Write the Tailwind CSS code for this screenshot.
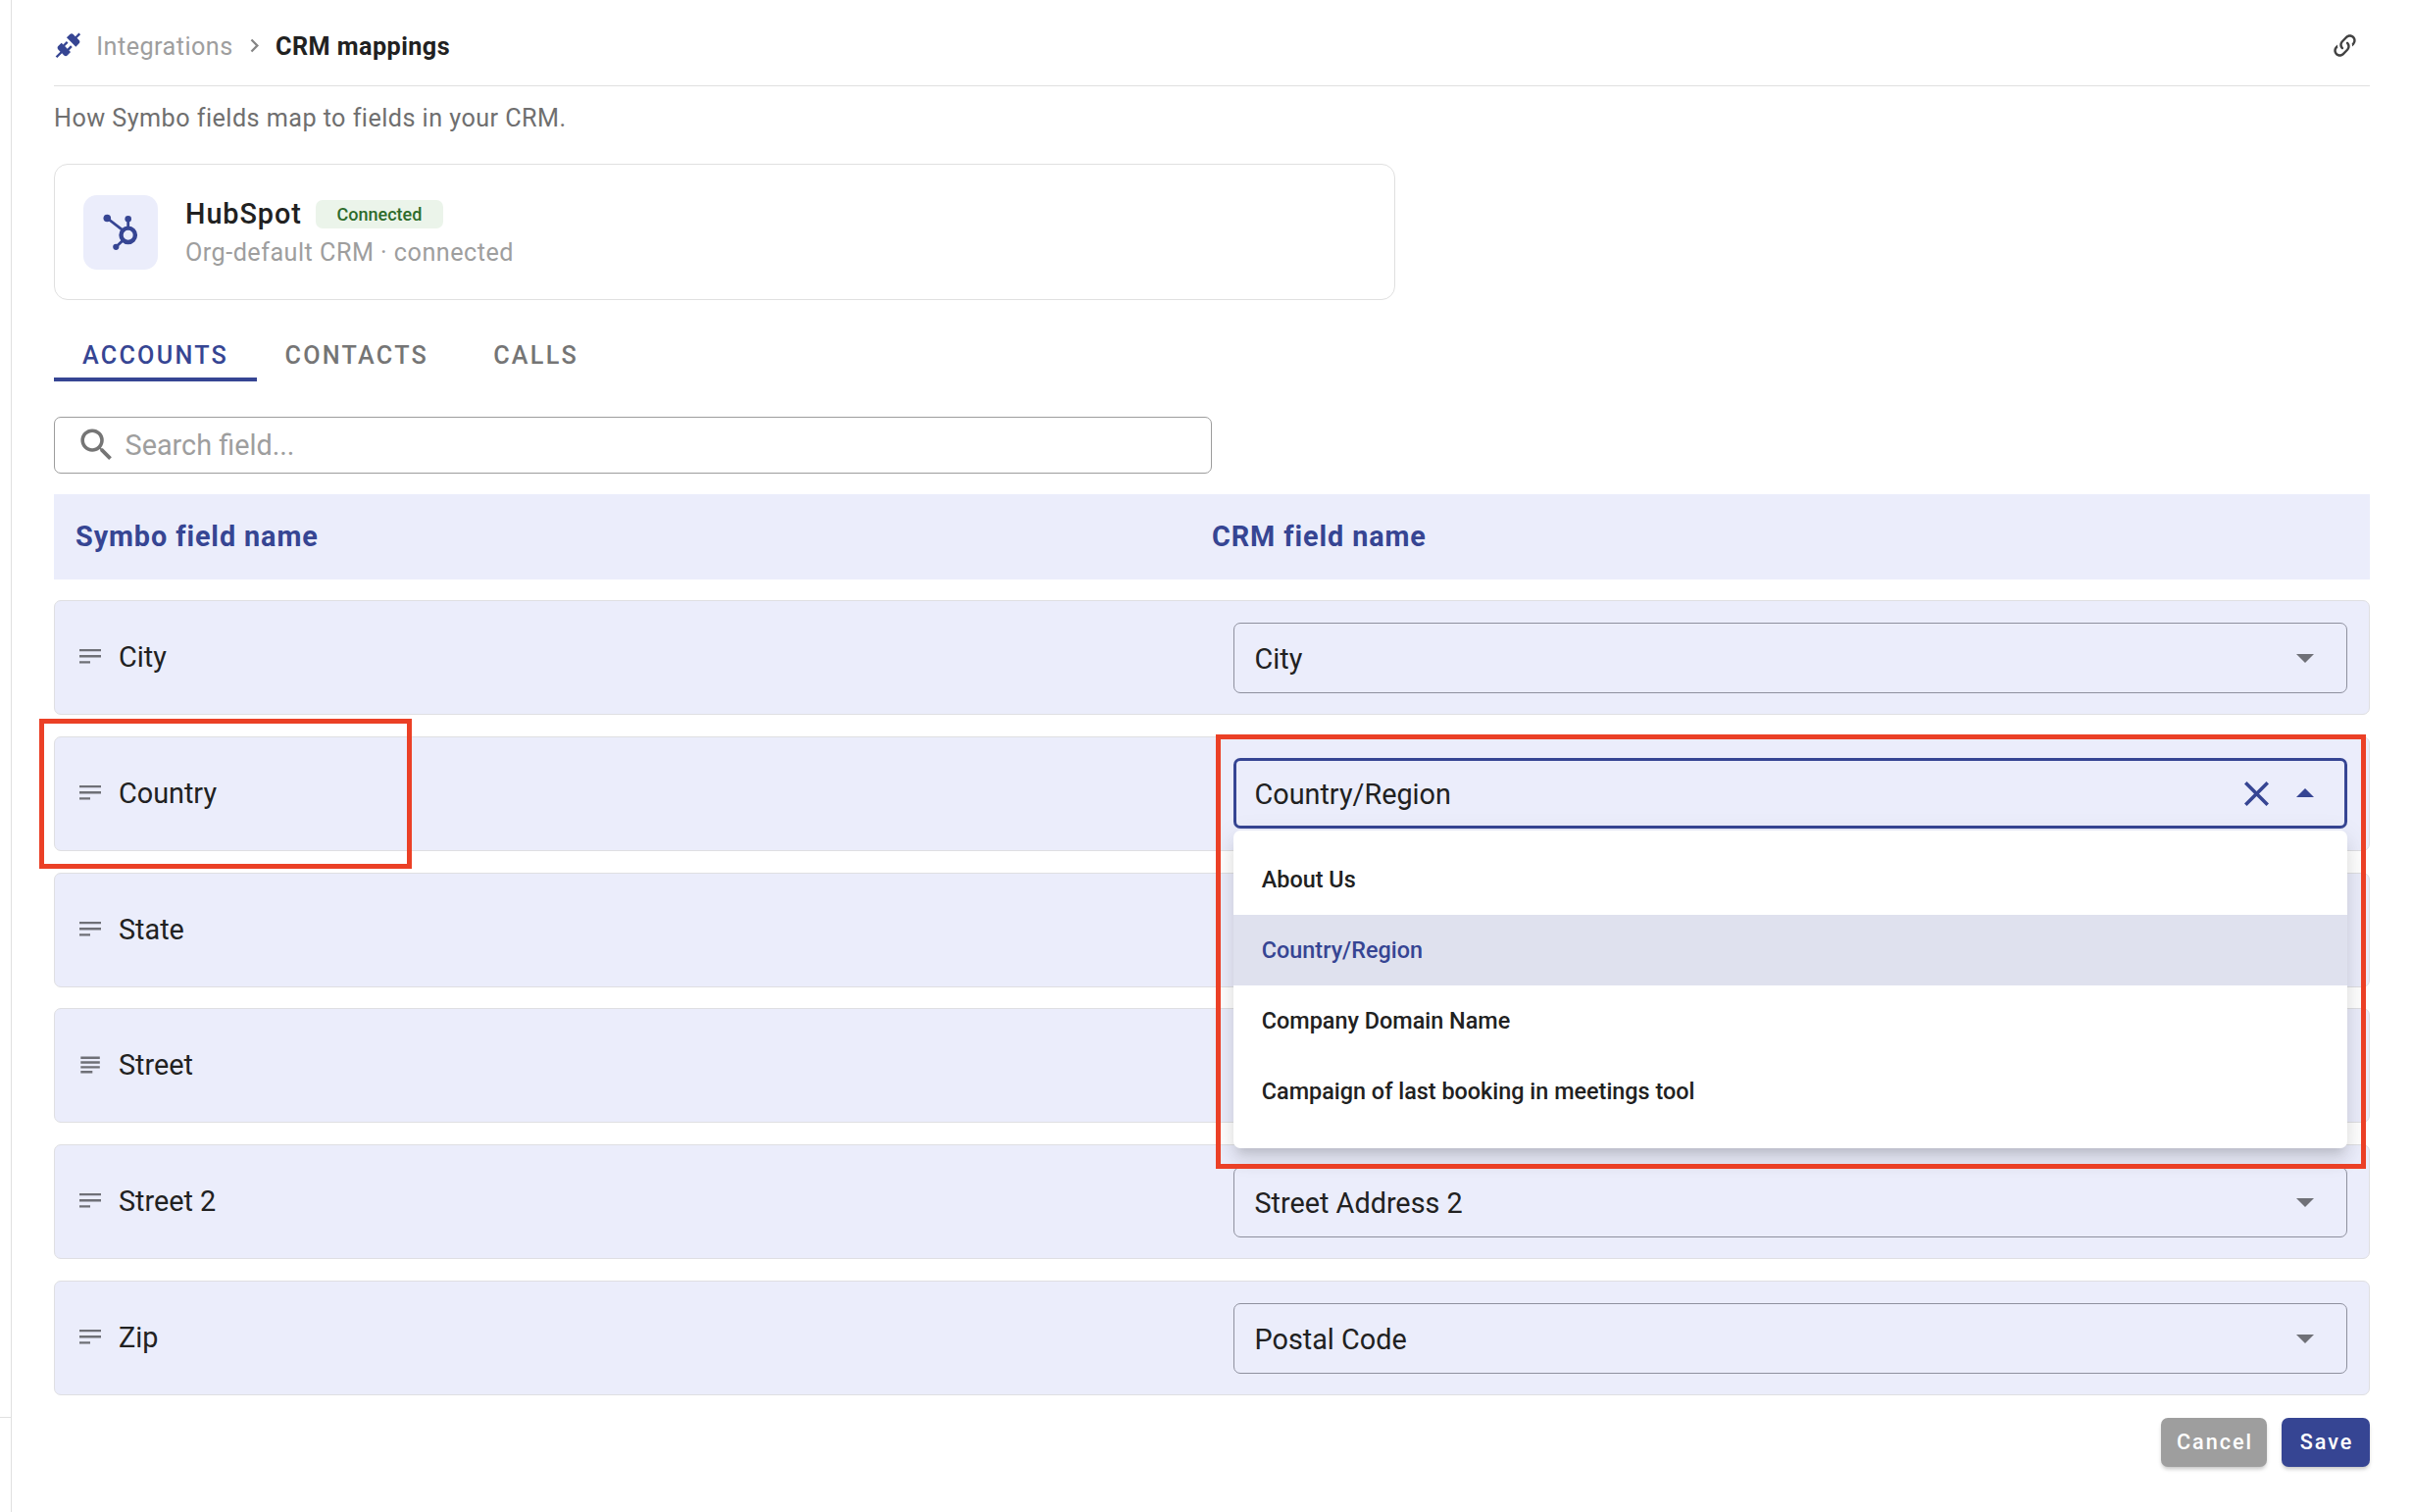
<!DOCTYPE html>
<html lang="en">
<head>
<meta charset="utf-8">
<title>CRM mappings</title>
<script src="https://cdn.jsdelivr.net/npm/@tailwindcss/browser@4"></script>
</head>
<body class="relative h-[1542px] w-[2460px] overflow-hidden bg-white font-[Roboto,sans-serif] text-[#212121]">
<svg class="hidden">
  <symbol id="text-short" viewBox="0 0 22 16"><path d="M0 0h22v2.2H0zM0 6h22v2.5H0zM0 12.2h11v2.4H0z"/></symbol>
  <symbol id="text-long" viewBox="0 0 22 18"><path d="M1.3 .5h19.5v2.4H1.3zM1.3 5.3h19.5v2.4H1.3zM1.3 10.2h19.5v2.4H1.3zM1.3 15h12v2.4h-12z"/></symbol>
  <symbol id="caret" viewBox="0 0 18 9"><path d="M0 0h18L9 9z"/></symbol>
</svg>
<div class="flex h-full">
  <aside class="h-full w-[12px] shrink-0 border-r border-[#e0e0e0]">
    <div class="h-[1446px] border-b border-[#e0e0e0]"></div>
  </aside>

  <main class="ml-[43px] flex w-[2362px] flex-col">
    <header class="flex h-[88px] items-center border-b border-[#e0e0e0] pt-2 text-[25.2px]">
      <svg class="-mt-0.5 size-[28.8px] fill-[#364593]" viewBox="0 0 24 24"><path d="M21.4 7.5C22.2 8.3 22.2 9.6 21.4 10.3L18.6 13.1L10.8 5.3L13.6 2.5C14.4 1.7 15.7 1.7 16.4 2.5L18.2 4.3L21.2 1.3L22.6 2.7L19.6 5.7L21.4 7.5M15.6 13.3L14.2 11.9L11.4 14.7L9.3 12.6L12.1 9.8L10.7 8.4L7.9 11.2L6.4 9.8L3.6 12.6C2.8 13.4 2.8 14.7 3.6 15.4L5.4 17.2L1.4 21.2L2.8 22.6L6.8 18.6L8.6 20.4C9.4 21.2 10.7 21.2 11.4 20.4L14.2 17.6L12.8 16.2L15.6 13.3Z"/></svg>
      <span class="ml-[14.5px] w-[147.7px] pt-px tracking-[0.45px] text-[#9e9e9e]">Integrations</span>
      <svg class="-mt-0.5 size-[27px] fill-[#858585]" viewBox="0 0 24 24"><path d="M8.59 16.58L13.17 12L8.59 7.41L10 6L16 12L10 18L8.59 16.58Z"/></svg>
      <span class="ml-[8px] pt-px font-bold tracking-[0.45px]">CRM mappings</span>
      <svg class="-mt-[3px] mr-[11px] ml-auto size-[29px] fill-[#424242]" viewBox="0 0 24 24"><path d="M10.59,13.41C11,13.8 11,14.44 10.59,14.83C10.2,15.22 9.56,15.22 9.17,14.83C7.22,12.88 7.22,9.71 9.17,7.76V7.76L12.71,4.22C14.66,2.27 17.83,2.27 19.78,4.22C21.73,6.17 21.73,9.34 19.78,11.29L18.29,12.78C18.3,11.96 18.17,11.14 17.89,10.36L18.36,9.88C19.54,8.71 19.54,6.81 18.36,5.64C17.19,4.46 15.29,4.46 14.12,5.64L10.59,9.17C9.41,10.34 9.41,12.24 10.59,13.41M13.41,9.17C13.8,8.78 14.44,8.78 14.83,9.17C16.78,11.12 16.78,14.29 14.83,16.24V16.24L11.29,19.78C9.34,21.73 6.17,21.73 4.22,19.78C2.27,17.83 2.27,14.66 4.22,12.71L5.71,11.22C5.7,12.04 5.83,12.86 6.11,13.65L5.64,14.12C4.46,15.29 4.46,17.19 5.64,18.36C6.81,19.54 8.71,19.54 9.88,18.36L13.41,14.83C14.59,13.66 14.59,11.76 13.41,10.59C13,10.2 13,9.56 13.41,9.17Z"/></svg>
    </header>

    <p class="flex h-[65px] items-center pt-px text-[25.2px] tracking-[0.45px] text-[#6f6f6f]">How Symbo fields map to fields in your CRM.</p>

    <section class="mt-[14px] flex h-[139px] w-[1368px] items-center rounded-[14px] border border-[#e0e0e0] pl-[29px]">
      <div class="size-[76px] rounded-[14px] bg-[#ebedfb]">
        <svg class="size-[76px]" viewBox="85 199 76 76" fill="#364593" stroke="#364593">
          <circle cx="109.3" cy="222.5" r="3.8" stroke="none"/>
          <circle cx="130.7" cy="223.2" r="3.3" stroke="none"/>
          <circle cx="118.3" cy="251.8" r="3.1" stroke="none"/>
          <path d="M109.3 222.5L125 234.6M130.7 223V232M118.3 251.8L125 245.5" fill="none" stroke-width="2.8"/>
          <circle cx="130.7" cy="239.8" r="7.2" fill="none" stroke-width="4.4"/>
        </svg>
      </div>
      <div class="ml-7 flex flex-col pt-1">
        <div class="flex h-[38px] items-center">
          <h2 class="w-[133px] text-[28.8px] font-medium tracking-[0.95px]">HubSpot</h2>
          <span class="flex h-[29px] w-[130px] items-center justify-center rounded-[7px] bg-[#ebf4ea] text-[18px] font-medium text-[#2e6b2b]">Connected</span>
        </div>
        <p class="flex h-[40px] items-center text-[25.2px] tracking-[0.48px] text-[#9e9e9e]">Org-default CRM · connected</p>
      </div>
    </section>

    <nav class="mt-[30px] flex h-[53px] text-[25.2px] font-medium tracking-[2.25px] text-[#757575]">
      <div class="flex w-[207px] items-center justify-center border-b-4 border-[#364593] pt-[5px] text-[#364593]">ACCOUNTS</div>
      <div class="flex w-[203.6px] items-center justify-center pt-px">CONTACTS</div>
      <div class="flex w-[162px] items-center justify-center pt-px">CALLS</div>
    </nav>

    <div class="mt-9 flex h-[58px] w-[1181px] items-center rounded-[7px] border border-[#9c9c9c] pl-[21px] text-[28.8px] text-[#9e9e9e]">
      <svg class="size-[43.2px] fill-[#757575]" viewBox="0 0 24 24"><path d="M9.5,3A6.5,6.5 0 0,1 16,9.5C16,11.11 15.41,12.59 14.44,13.73L14.71,14H15.5L20.5,19L19,20.5L14,15.5V14.71L13.73,14.44C12.59,15.41 11.11,16 9.5,16A6.5,6.5 0 0,1 3,9.5A6.5,6.5 0 0,1 9.5,3M9.5,5C7,5 5,7 5,9.5C5,12 7,14 9.5,14C12,14 14,12 14,9.5C14,7 12,5 9.5,5Z"/></svg>
      <span class="ml-[7.4px] pt-0.5">Search field...</span>
    </div>

    <div class="mt-[21px] grid h-[87px] grid-cols-2 items-center bg-[#ebedfb] text-[28.8px] font-bold tracking-[0.9px] text-[#364593]">
      <span class="pl-[22px]">Symbo field name</span>
      <span>CRM field name</span>
    </div>

    <div class="mt-[21px] flex flex-col gap-[21.8px] text-[28.8px]">
      <div class="flex h-[117px] items-center justify-between rounded-[7px] border border-[#dfdfe2] bg-[#ebedfb] pr-[22px] pl-[25px]">
        <div class="flex items-center"><svg class="-mt-px h-4 w-[22px] fill-[#6f7077]"><use href="#text-short"/></svg><span class="ml-[18px]">City</span></div>
        <div class="mt-[0.3px] flex h-[72px] w-[1136px] items-center justify-between rounded-[7px] border border-[#8e909e] pr-[33px] pl-[20.5px]"><span class="pt-[3px]">City</span><svg class="mt-[1px] h-[9px] w-[18px] fill-[#6f7077]"><use href="#caret"/></svg></div>
      </div>

      <div class="flex h-[117px] items-center justify-between rounded-[7px] border border-[#dfdfe2] bg-[#ebedfb] pr-[22px] pl-[25px]">
        <div class="flex items-center"><svg class="-mt-px h-4 w-[22px] fill-[#6f7077]"><use href="#text-short"/></svg><span class="ml-[18px]">Country</span></div>
        <div class="relative mt-[0.3px] flex h-[72px] w-[1136px] items-center rounded-[7px] border-3 border-[#364593] pr-[31.5px] pl-[18.5px]">
          <span class="pt-[3px]">Country/Region</span>
          <svg class="mr-[27.5px] ml-auto size-[25px] fill-[#364593]" viewBox="5 5 14 14"><path d="M19,6.41L17.59,5L12,10.59L6.41,5L5,6.41L10.59,12L5,17.59L6.41,19L12,13.41L17.59,19L19,17.59L13.41,12L19,6.41Z"/></svg>
          <svg class="-mt-px h-[9px] w-[18px] rotate-180 fill-[#364593]"><use href="#caret"/></svg>
          <div class="absolute -left-[3px] top-[71px] z-10 h-[324px] w-[1136px] rounded-[7px] bg-white pt-[14px] text-[23.4px] font-medium shadow-[0_9px_9px_-5px_rgba(0,0,0,0.1),0_14px_18px_2px_rgba(0,0,0,0.07),0_5px_25px_4px_rgba(0,0,0,0.06)]">
            <div class="flex h-[72px] items-center pl-[28.8px]">About Us</div>
            <div class="flex h-[72px] items-center bg-[#dfe1ee] pl-[28.8px] text-[#364593]">Country/Region</div>
            <div class="flex h-[72px] items-center pl-[28.8px]">Company Domain Name</div>
            <div class="flex h-[72px] items-center pl-[28.8px]">Campaign of last booking in meetings tool</div>
          </div>
        </div>
      </div>

      <div class="flex h-[117px] items-center justify-between rounded-[7px] border border-[#dfdfe2] bg-[#ebedfb] pr-[22px] pl-[25px]">
        <div class="flex items-center"><svg class="-mt-px h-4 w-[22px] fill-[#6f7077]"><use href="#text-short"/></svg><span class="ml-[18px]">State</span></div>
      </div>

      <div class="flex h-[117px] items-center justify-between rounded-[7px] border border-[#dfdfe2] bg-[#ebedfb] pr-[22px] pl-[25px]">
        <div class="flex items-center"><svg class="-mt-px h-[18px] w-[22px] fill-[#6f7077]"><use href="#text-long"/></svg><span class="ml-[18px]">Street</span></div>
      </div>

      <div class="flex h-[117px] items-center justify-between rounded-[7px] border border-[#dfdfe2] bg-[#ebedfb] pr-[22px] pl-[25px]">
        <div class="flex items-center"><svg class="-mt-px h-4 w-[22px] fill-[#6f7077]"><use href="#text-short"/></svg><span class="ml-[18px]">Street 2</span></div>
        <div class="mt-[0.3px] flex h-[72px] w-[1136px] items-center justify-between rounded-[7px] border border-[#8e909e] pr-[33px] pl-[20.5px]"><span class="pt-[3px]">Street Address 2</span><svg class="mt-[1px] h-[9px] w-[18px] fill-[#6f7077]"><use href="#caret"/></svg></div>
      </div>

      <div class="flex h-[117px] items-center justify-between rounded-[7px] border border-[#dfdfe2] bg-[#ebedfb] pr-[22px] pl-[25px]">
        <div class="flex items-center"><svg class="-mt-px h-4 w-[22px] fill-[#6f7077]"><use href="#text-short"/></svg><span class="ml-[18px]">Zip</span></div>
        <div class="mt-[0.3px] flex h-[72px] w-[1136px] items-center justify-between rounded-[7px] border border-[#8e909e] pr-[33px] pl-[20.5px]"><span class="pt-[3px]">Postal Code</span><svg class="mt-[1px] h-[9px] w-[18px] fill-[#6f7077]"><use href="#caret"/></svg></div>
      </div>
    </div>

    <footer class="mt-[23px] flex justify-end gap-[15px] text-[21.6px] font-medium tracking-[2px] text-white">
      <button class="flex h-[50px] w-[108px] items-center justify-center rounded-[7px] bg-[#9e9e9e] pt-px pl-0.5 shadow-[0_3px_4px_-1px_rgba(0,0,0,0.25)]">Cancel</button>
      <button class="flex h-[50px] w-[90px] items-center justify-center rounded-[7px] bg-[#364593] pt-px pl-0.5 shadow-[0_3px_4px_-1px_rgba(0,0,0,0.25)]">Save</button>
    </footer>
  </main>
</div>

<!-- highlight frames -->
<div class="absolute left-[40px] top-[733px] z-20 h-[153px] w-[380px] border-5 border-[#eb4026]"></div>
<div class="absolute left-[1240px] top-[749px] z-20 h-[443px] w-[1173px] border-5 border-[#eb4026]"></div>
</body>
</html>
